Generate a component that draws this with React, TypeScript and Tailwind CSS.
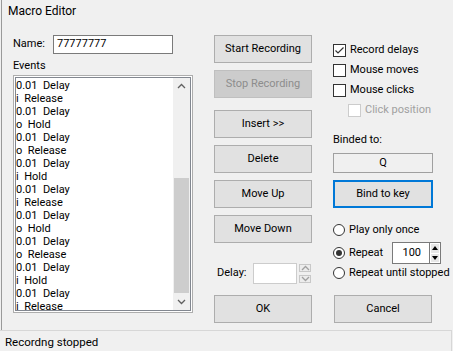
import React from "react";

const items = [
  "0.01  Delay",
  "i  Release",
  "0.01  Delay",
  "o  Hold",
  "0.01  Delay",
  "o  Release",
  "0.01  Delay",
  "i  Hold",
  "0.01  Delay",
  "i  Release",
  "0.01  Delay",
  "o  Hold",
  "0.01  Delay",
  "o  Release",
  "0.01  Delay",
  "i  Hold",
  "0.01  Delay",
  "i  Release",
];

function Btn({ children, disabled, focused, className = "" }: { children: React.ReactNode; disabled?: boolean; focused?: boolean; className?: string }) {
  const base = disabled
    ? "bg-[#cccccc] border border-[#bfbfbf] text-[#8d8d8d]"
    : focused
    ? "bg-[#e1e1e1] border-2 border-[#0078d7] text-black"
    : "bg-[#e1e1e1] border border-[#adadad] text-black";
  return (
    <div className={`h-[28px] flex items-center justify-center text-[11px] ${base} ${className}`}>
      {children}
    </div>
  );
}

function Check({ checked, disabled, label, className = "" }: { checked?: boolean; disabled?: boolean; label: string; className?: string }) {
  return (
    <div className={`h-[20px] flex items-center gap-[4px] ${className}`}>
      <div className={`w-[13px] h-[13px] bg-white border ${disabled ? "border-[#cccccc]" : "border-[#333333]"} flex items-center justify-center`}>
        {checked && (
          <svg width="11" height="11" viewBox="0 0 11 11">
            <path d="M1.5 5.5 L4 8 L9.5 2.5" fill="none" stroke="#333" strokeWidth="1.2" />
          </svg>
        )}
      </div>
      <span className={disabled ? "text-[#a0a0a0]" : "text-black"}>{label}</span>
    </div>
  );
}

function Radio({ checked }: { checked?: boolean }) {
  return (
    <div className="w-[12px] h-[12px] shrink-0 rounded-full border border-[#333333] bg-white flex items-center justify-center">
      {checked && <div className="w-[6px] h-[6px] rounded-full bg-[#333333]" />}
    </div>
  );
}

function Chevron({ up, color = "#606060" }: { up?: boolean; color?: string }) {
  return (
    <svg width="9" height="6" viewBox="0 0 9 6">
      <path d={up ? "M1 5 L4.5 1.5 L8 5" : "M1 1 L4.5 4.5 L8 1"} fill="none" stroke={color} strokeWidth="1.3" />
    </svg>
  );
}

export default function App() {
  return (
    <div
      className="w-[453px] h-[351px] bg-[#f0f0f0] flex flex-col overflow-hidden text-[11px] text-black"
      style={{ fontFamily: "Roboto, 'Liberation Sans', sans-serif" }}
    >
      <div className="h-[331px] ml-[1px] border-l border-[#9a9a9a] flex flex-col">
        <div className="h-[22px] flex items-center pl-[6px] text-[12px]">Macro Editor</div>
        <div className="flex-1 flex pl-[11px]">
          {/* left column */}
          <div className="w-[180px] pt-[13px] flex flex-col">
            <div className="h-[19px] flex items-center">
              <span className="w-[40px]">Name:</span>
              <div className="w-[120px] h-[19px] bg-white border border-[#7a7a7a] flex items-center pl-[3px]">77777777</div>
            </div>
            <div className="h-[21px] pt-[5px] leading-[13px]">Events</div>
            <div className="h-[238px] border border-[#adadad] bg-white p-px">
              <div className="h-full border border-[#828790] flex">
                <div className="flex-1 pt-px leading-[13px] whitespace-pre">
                  {items.map((t, i) => (
                    <div key={i} className="h-[13px]">{t}</div>
                  ))}
                </div>
                <div className="w-[17px] bg-[#f0f0f0] flex flex-col items-center">
                  <div className="h-[17px] flex items-center justify-center"><Chevron up /></div>
                  <div className="flex-1 w-full px-[1px] pt-[84px] pb-[1px]">
                    <div className="h-[115px] bg-[#cdcdcd]" />
                  </div>
                  <div className="h-[17px] flex items-center justify-center"><Chevron /></div>
                </div>
              </div>
            </div>
          </div>

          {/* middle column */}
          <div className="w-[98px] ml-[21px] pt-[13px] flex flex-col">
            <Btn>Start Recording</Btn>
            <Btn disabled className="mt-[7px]">Stop Recording</Btn>
            <Btn className="mt-[12px]">Insert &gt;&gt;</Btn>
            <Btn className="mt-[7px]">Delete</Btn>
            <Btn className="mt-[7px]">Move Up</Btn>
            <Btn className="mt-[7px]">Move Down</Btn>
            <div className="mt-[20px] h-[21px] flex items-center">
              <span className="w-[39px] pl-[3px]">Delay:</span>
              <div className="w-[44px] h-[21px] bg-white border border-[#cccccc]" />
              <div className="ml-[2px] w-[12px] h-[21px] flex flex-col justify-between py-[1px]">
                <div className="h-[8px] border border-[#c8c8c8] bg-[#ececec] flex items-center justify-center"><Chevron up color="#a0a0a0" /></div>
                <div className="h-[8px] border border-[#c8c8c8] bg-[#ececec] flex items-center justify-center"><Chevron color="#a0a0a0" /></div>
              </div>
            </div>
            <Btn className="mt-[11px]">OK</Btn>
          </div>

          {/* right column */}
          <div className="w-[118px] ml-[21px] pt-[18px] flex flex-col whitespace-nowrap">
            <Check checked label="Record delays" />
            <Check label="Mouse moves" />
            <Check label="Mouse clicks" />
            <Check disabled label="Click position" className="pl-[15px]" />
            <div className="mt-[13px] leading-[14px]">Binded to:</div>
            <div className="mt-[6px] w-[100px] h-[20px] border border-[#a0a0a0] bg-[#f0f0f0] flex items-center justify-center">Q</div>
            <Btn focused className="mt-[7px] w-[100px]">Bind to key</Btn>
            <div className="mt-[12px] h-[20px] flex items-center">
              <Radio />
              <span className="ml-[4px]">Play only once</span>
            </div>
            <div className="mt-[2px] h-[22px] flex items-center">
              <Radio checked />
              <span className="ml-[4px] w-[43px]">Repeat</span>
              <div className="w-[37px] h-[22px] bg-white border border-[#7a7a7a] border-r-0 flex items-center justify-end pr-[8px]">100</div>
              <div className="w-[12px] h-[22px] bg-white border border-[#7a7a7a] flex flex-col p-px">
                <div className="flex-1 bg-[#e6e6e6] flex items-center justify-center">
                  <svg width="6" height="4" viewBox="0 0 6 4"><path d="M0 4 L3 0 L6 4 Z" fill="#000" /></svg>
                </div>
                <div className="h-px" />
                <div className="flex-1 bg-[#e6e6e6] flex items-center justify-center">
                  <svg width="6" height="4" viewBox="0 0 6 4"><path d="M0 0 L3 4 L6 0 Z" fill="#000" /></svg>
                </div>
              </div>
            </div>
            <div className="h-[18px] flex items-center">
              <Radio />
              <span className="ml-[4px]">Repeat until stopped</span>
            </div>
            <Btn className="mt-[13px] ml-[1px] w-[98px]">Cancel</Btn>
          </div>
        </div>
      </div>
      <div className="flex-1 border-t border-[#d7d7d7] mr-[1px] border-r flex items-center pl-[5px] pt-[3px] text-[11.5px]">
        Recordng stopped
      </div>
    </div>
  );
}
